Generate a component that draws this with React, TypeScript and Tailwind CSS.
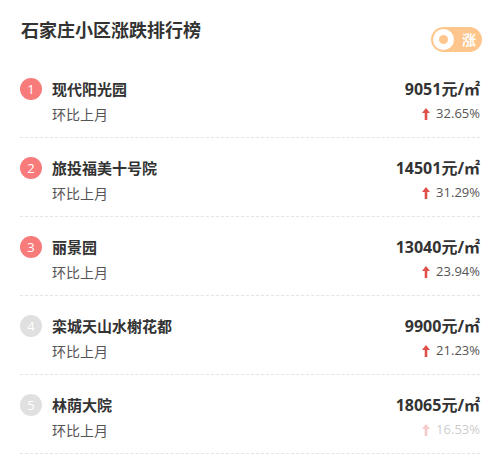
import React from "react";

const rows = [
  { rank: 1, name: "现代阳光园", price: "9051", pct: "32.65%", hot: true, fade: false },
  { rank: 2, name: "旅投福美十号院", price: "14501", pct: "31.29%", hot: true, fade: false },
  { rank: 3, name: "丽景园", price: "13040", pct: "23.94%", hot: true, fade: false },
  { rank: 4, name: "栾城天山水榭花都", price: "9900", pct: "21.23%", hot: false, fade: false },
  { rank: 5, name: "林荫大院", price: "18065", pct: "16.53%", hot: false, fade: true },
];

function UpArrow() {
  return (
    <svg width="8" height="12" viewBox="0 0 8 12" className="shrink-0">
      <path d="M4 0 L8 5 L5.3 5 L5.3 12 L2.7 12 L2.7 5 L0 5 Z" fill="#e0504a" />
    </svg>
  );
}

export default function App() {
  return (
    <div
      className="w-[494px] h-[461px] bg-white pl-5 pr-[14px] overflow-hidden"
      style={{ fontFamily: '"Open Sans", "Noto Sans CJK SC", sans-serif' }}
    >
      <div className="flex justify-between items-start pt-4">
        <h1 className="text-[18px] leading-7 font-bold text-[#333] ml-[1px]">石家庄小区涨跌排行榜</h1>
        <div className="mt-[11px] -mr-[2px] h-[25px] w-[51px] rounded-full bg-[#fec68c] flex items-center pl-[2px] pr-[6px] justify-between">
          <div className="w-[21px] h-[21px] rounded-full bg-white flex items-center justify-center">
            <div className="w-[9px] h-[9px] rounded-full bg-[#fec68c]" />
          </div>
          <span className="text-white text-[14px] font-bold leading-none">涨</span>
        </div>
      </div>
      <div className="mt-[7px]">
        {rows.map((r) => (
          <div key={r.rank} className="pt-5 pb-[13px] border-b border-dashed border-[#e4e4e4]">
            <div className="flex items-center justify-between h-5">
              <div className="flex items-center">
                <div
                  className={
                    "w-[22px] h-[22px] rounded-full flex items-center justify-center text-white text-[13px] leading-none " +
                    (r.hot ? "bg-[#f77b7b]" : "bg-[#e0e0e0]")
                  }
                >
                  {r.rank}
                </div>
                <span className="ml-[10px] text-[15px] font-bold text-[#333]">{r.name}</span>
              </div>
              <span className="text-[16px] font-bold text-[#333]">
                {r.price}元/㎡
              </span>
            </div>
            <div className="flex items-center justify-between h-5 mt-[5px]">
              <span className="ml-8 text-[14px] text-[#555]">环比上月</span>
              <span className={"flex items-center gap-[6px] text-[13px] text-[#555] " + (r.fade ? "opacity-30" : "")}>
                <UpArrow />
                {r.pct}
              </span>
            </div>
          </div>
        ))}
      </div>
    </div>
  );
}
